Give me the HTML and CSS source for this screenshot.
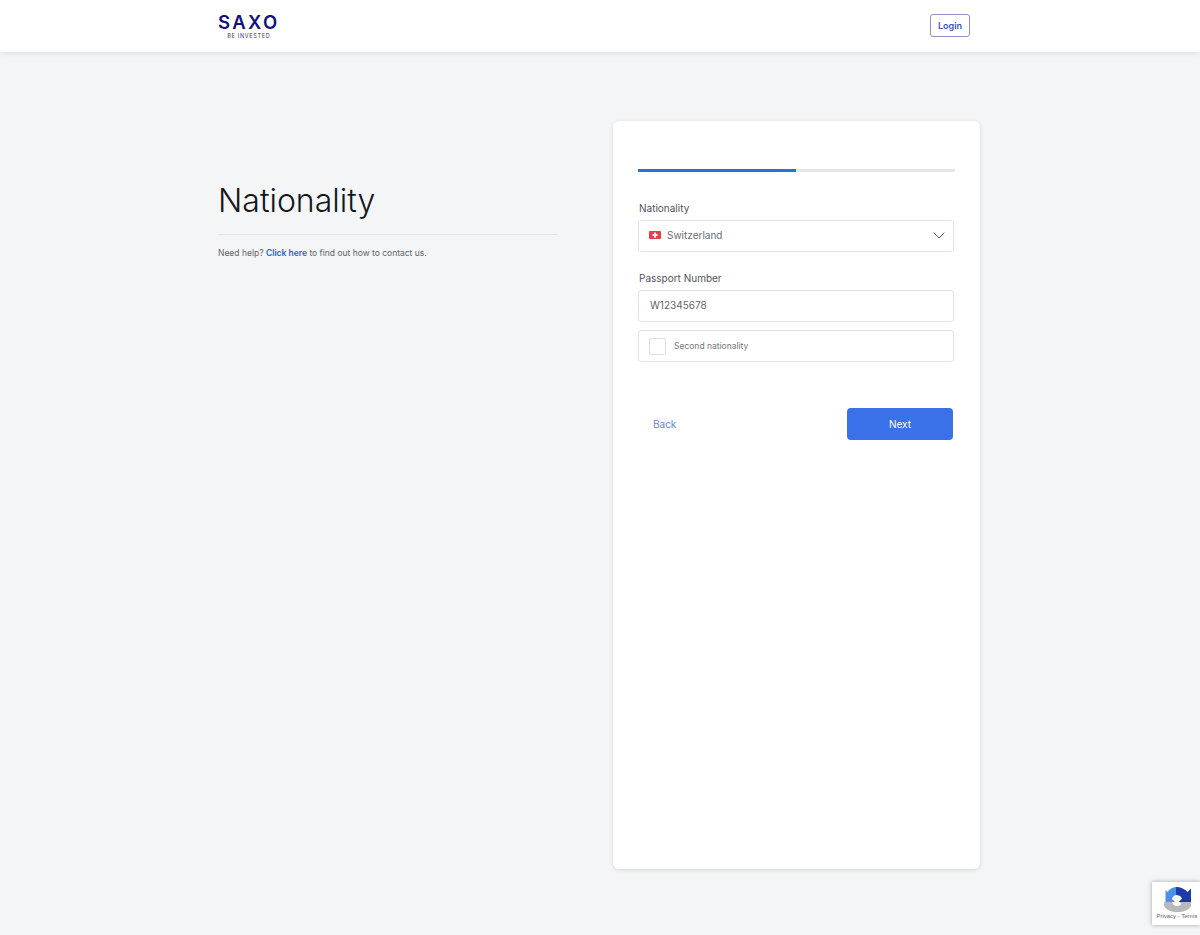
FILE: index.html
```html
<!DOCTYPE html>
<html lang="en">
<head>
    <meta charset="UTF-8">
    <meta name="viewport" content="width=device-width, initial-scale=1.0">
    <title>Nationality</title>
    <link rel="stylesheet" href="styles.css">
</head>
<body>
    <header class="topbar">
        <div class="logo">
            <span class="logo-name">SAXO</span>
            <span class="logo-tag">BE INVESTED</span>
        </div>
        <button class="login-btn" type="button">Login</button>
    </header>
    <main class="page">
        <section class="intro">
            <h1>Nationality</h1>
            <div class="line"></div>
            <p class="help">Need help? <a href="#">Click here</a> to find out how to contact us.</p>
        </section>
        <section class="card">
            <div class="progress"><div class="progress-done"></div></div>
            <label class="field-label field-label-first">Nationality</label>
            <div class="box select-box">
                <svg class="flag" width="12" height="8" viewBox="0 0 12 8">
                    <rect width="12" height="8" rx="1" fill="#ee3b48"/>
                    <path d="M5 1.6h2v1.4h1.4v2H7v1.4H5V5H3.6V3H5z" fill="#fff"/>
                </svg>
                <span class="select-text">Switzerland</span>
                <svg class="chevron" width="12" height="7" viewBox="0 0 12 7">
                    <path d="M.7.8 6 6l5.300-5.200" fill="none" stroke="#555b66" stroke-width="1"/>
                </svg>
            </div>
            <label class="field-label">Passport Number</label>
            <div class="box input-box">W12345678</div>
            <div class="box check-box">
                <span class="check"></span>
                <span class="check-text">Second nationality</span>
            </div>
            <div class="actions">
                <a class="back" href="#">Back</a>
                <button class="next" type="button">Next</button>
            </div>
        </section>
    </main>
    <div class="recaptcha">
        <svg width="27" height="25" viewBox="0 0 27 25">
            <path d="M12 0C8.500.3 5.500 2.200 3.500 5L1.500 3v12h9.500L8 12c.5-2 2-3.500 4-4z" fill="#4a90e8"/>
            <path d="M12 0c5 0 9 2 11.500 5L27 1.500V15H14.500l3.500-3.500C17 9 14.500 8 12 8z" fill="#1c3aa9"/>
            <path d="M0 15h8c.8 2.500 2.800 4 5.200 4 1.800 0 3.400-.8 4.300-2.200L15.500 15H27v4c-2.500 4-7 6-13.500 6S2.500 23 0 19z" fill="#b9b9b9"/>
        </svg>
        <span class="recaptcha-text">Privacy - Terms</span>
    </div>
</body>
</html>
```

FILE: styles.css
```css
* {
    box-sizing: border-box;
}
html, body {
    height: 100%;
}
body {
    margin: 0;
    font-family: "Inter", "Liberation Sans", sans-serif;
    background: #f4f5f7;
    color: #4b4f57;
    overflow: hidden;
}
.topbar {
    height: 52px;
    background: #fff;
    box-shadow: 0 1px 5px rgba(0, 0, 0, 0.1);
    display: flex;
    justify-content: space-between;
    align-items: center;
    padding: 0 230px 2px 218px;
}
.logo {
    display: flex;
    flex-direction: column;
    align-items: center;
    margin-top: 4px;
}
.logo-name {
    font-size: 18.5px;
    line-height: 18px;
    font-weight: 600;
    letter-spacing: 2.4px;
    color: #12127a;
}
.logo-tag {
    font-size: 5.5px;
    line-height: 10px;
    letter-spacing: 0.7px;
    color: #2f2f8c;
}
.login-btn {
    width: 40px;
    height: 23px;
    padding: 0;
    border: 1px solid #8f8fc9;
    border-radius: 3px;
    background: #fff;
    color: #3b55c4;
    font: 600 9px "Inter", sans-serif;
}
.page {
    display: flex;
    padding: 69px 0 0 218px;
}
.intro {
    width: 339px;
    margin-right: 56px;
    padding-top: 60px;
}
h1 {
    margin: 0;
    font-size: 32px;
    line-height: 40px;
    font-weight: 300;
    color: #14161a;
}
.line {
    height: 1px;
    background: #e3e4e8;
    margin-top: 13px;
}
.help {
    margin: 12px 0 0;
    font-size: 8.5px;
    line-height: 12px;
    color: #5f6269;
}
.help a {
    color: #2f5fd0;
    font-weight: 600;
    text-decoration: none;
}
.card {
    width: 367px;
    height: 748px;
    padding: 48px 25px 0;
    background: #fff;
    border-radius: 6px;
    box-shadow: 0 1px 4px rgba(0, 0, 0, 0.12);
}
.progress {
    height: 3px;
    width: 317px;
    background: #e6e6e8;
}
.progress-done {
    width: 158px;
    height: 100%;
    background: #2a6fdc;
}
.field-label {
    display: block;
    margin: 19px 0 5px 1px;
    font-size: 10px;
    line-height: 14px;
    color: #50535a;
}
.field-label-first {
    margin: 29px 0 5px 1px;
}
.box {
    width: 316px;
    height: 32px;
    border: 1px solid #e2e3e6;
    border-radius: 3px;
    display: flex;
    align-items: center;
    background: #fff;
}
.select-box {
    padding: 0 8px 2px 10px;
    font-size: 10px;
    color: #6b6e75;
}
.select-text {
    margin-left: 6px;
    flex: 1;
}
.input-box {
    padding: 0 11px 2px;
    font-size: 10px;
    color: #63666d;
}
.check-box {
    margin-top: 8px;
    padding: 0 10px;
}
.check {
    width: 17px;
    height: 17px;
    border: 1px solid #dddee1;
    border-radius: 2px;
}
.check-text {
    margin-left: 8px;
    font-size: 8.5px;
    color: #74777d;
}
.actions {
    width: 315px;
    margin-top: 46px;
    display: flex;
    justify-content: space-between;
    align-items: center;
}
.back {
    margin-left: 15px;
    font-size: 10px;
    color: #6a84dc;
    text-decoration: none;
}
.next {
    width: 106px;
    height: 32px;
    padding: 0;
    border: 0;
    border-radius: 4px;
    background: #3a70e8;
    color: #fff;
    font: 400 10px "Inter", sans-serif;
}
.recaptcha {
    position: absolute;
    right: 0;
    top: 882px;
    width: 48px;
    height: 43px;
    background: #fff;
    box-shadow: 0 0 4px rgba(0, 0, 0, 0.35);
    display: flex;
    flex-direction: column;
    align-items: center;
    padding: 5px 0 0 2px;
    overflow: hidden;
}
.recaptcha-text {
    font-family: "Liberation Sans", sans-serif;
    font-size: 6px;
    line-height: 9px;
    white-space: nowrap;
    color: #666;
}
```
